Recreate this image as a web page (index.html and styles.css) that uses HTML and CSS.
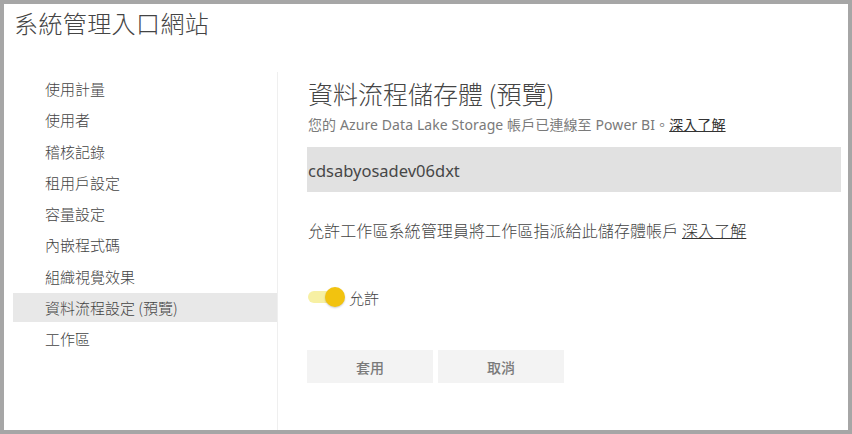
FILE: index.html
```html
<!DOCTYPE html>
<html lang="zh-Hant">
<head>
<meta charset="utf-8">
<title>系統管理入口網站</title>
<link rel="stylesheet" href="styles.css">
</head>
<body>
<div class="frame">
  <header class="header">
    <h1 class="title">系統管理入口網站</h1>
  </header>
  <div class="body">
    <nav class="sidebar">
      <div class="nav-item">使用計量</div>
      <div class="nav-item">使用者</div>
      <div class="nav-item">稽核記錄</div>
      <div class="nav-item">租用戶設定</div>
      <div class="nav-item">容量設定</div>
      <div class="nav-item">內嵌程式碼</div>
      <div class="nav-item">組織視覺效果</div>
      <div class="nav-item active">資料流程設定 (預覽)</div>
      <div class="nav-item">工作區</div>
    </nav>
    <main class="main">
      <h2 class="heading">資料流程儲存體 (預覽)</h2>
      <p class="subtitle">您的 Azure Data Lake Storage 帳戶已連線至 Power BI。<a class="link" href="#">深入了解</a></p>
      <div class="field">cdsabyosadev06dxt</div>
      <p class="desc">允許工作區系統管理員將工作區指派給此儲存體帳戶 <a class="link" href="#">深入了解</a></p>
      <div class="toggle-row">
        <span class="toggle"><span class="track"></span><span class="knob"></span></span>
        <span class="toggle-label">允許</span>
      </div>
      <div class="buttons">
        <button class="btn">套用</button>
        <button class="btn">取消</button>
      </div>
    </main>
  </div>
</div>
</body>
</html>
```
FILE: styles.css
```css
html, body {
  margin: 0;
  padding: 0;
  background: #ffffff;
}
body {
  font-family: "Noto Sans", "Noto Sans CJK TC", sans-serif;
  color: #444;
}
.frame {
  width: 852px;
  height: 434px;
  box-sizing: border-box;
  border: 4px solid #a6a6a6;
  background: #fff;
  display: flex;
  flex-direction: column;
  overflow: hidden;
}
.header {
  height: 68px;
  padding-left: 10px;
  box-sizing: border-box;
}
.title {
  margin: 0;
  padding-top: 2px;
  font-family: "Noto Sans CJK TC", sans-serif;
  font-weight: 300;
  font-size: 24px;
  line-height: 34px;
  color: #444;
  letter-spacing: 0.4px;
}
.body {
  flex: 1;
  display: flex;
}
.sidebar {
  width: 264px;
  margin-left: 9px;
  border-right: 1px solid #efefef;
  padding-top: 2px;
  display: flex;
  flex-direction: column;
  gap: 2.25px;
}
.nav-item {
  height: 29px;
  line-height: 29px;
  padding-left: 32px;
  font-family: "Noto Sans CJK TC", sans-serif;
  font-weight: 300;
  font-size: 15px;
  color: #444;
}
.nav-item.active {
  background: #e8e8e8;
}
.main {
  flex: 1;
  padding: 5px 7px 0 30px;
}
.heading {
  margin: 0;
  font-family: "Noto Sans CJK TC", sans-serif;
  font-weight: 300;
  font-size: 25px;
  line-height: 32px;
  color: #444;
}
.subtitle {
  margin: 6px 0 0;
  font-size: 14px;
  line-height: 20px;
  color: #7a7a7a;
  letter-spacing: 0.1px;
}
.link {
  color: #333;
  text-decoration: underline;
}
.field {
  margin-top: 12px;
  margin-left: -1px;
  height: 45px;
  line-height: 47px;
  background: #e1e1e1;
  padding-left: 1px;
  font-size: 16.5px;
  color: #474747;
}
.desc {
  margin: 27px 0 0;
  font-family: "Noto Sans CJK TC", sans-serif;
  font-weight: 300;
  font-size: 16px;
  line-height: 22px;
  color: #444;
  letter-spacing: 0.1px;
}
.toggle-row {
  margin-top: 45px;
  display: flex;
  align-items: center;
  gap: 4px;
  height: 22px;
}
.toggle {
  position: relative;
  width: 37px;
  height: 22px;
  display: inline-block;
}
.track {
  position: absolute;
  left: 0;
  top: 5px;
  width: 34px;
  height: 12px;
  border-radius: 6px;
  background: #f7f0a3;
}
.knob {
  position: absolute;
  left: 17px;
  top: 1px;
  width: 20px;
  height: 20px;
  border-radius: 50%;
  background: #f2c30f;
  box-shadow: 0 1px 2px rgba(0,0,0,0.2);
}
.toggle-label {
  font-family: "Noto Sans CJK TC", sans-serif;
  font-weight: 300;
  font-size: 15px;
  color: #444;
}
.buttons {
  margin-top: 42px;
  margin-left: -1px;
  display: flex;
  gap: 5px;
}
.btn {
  width: 126px;
  height: 33px;
  border: none;
  background: #f3f3f3;
  font-family: "Noto Sans CJK TC", sans-serif;
  font-size: 14px;
  font-weight: 500;
  color: #7a7a7a;
  padding: 0;
}
```
